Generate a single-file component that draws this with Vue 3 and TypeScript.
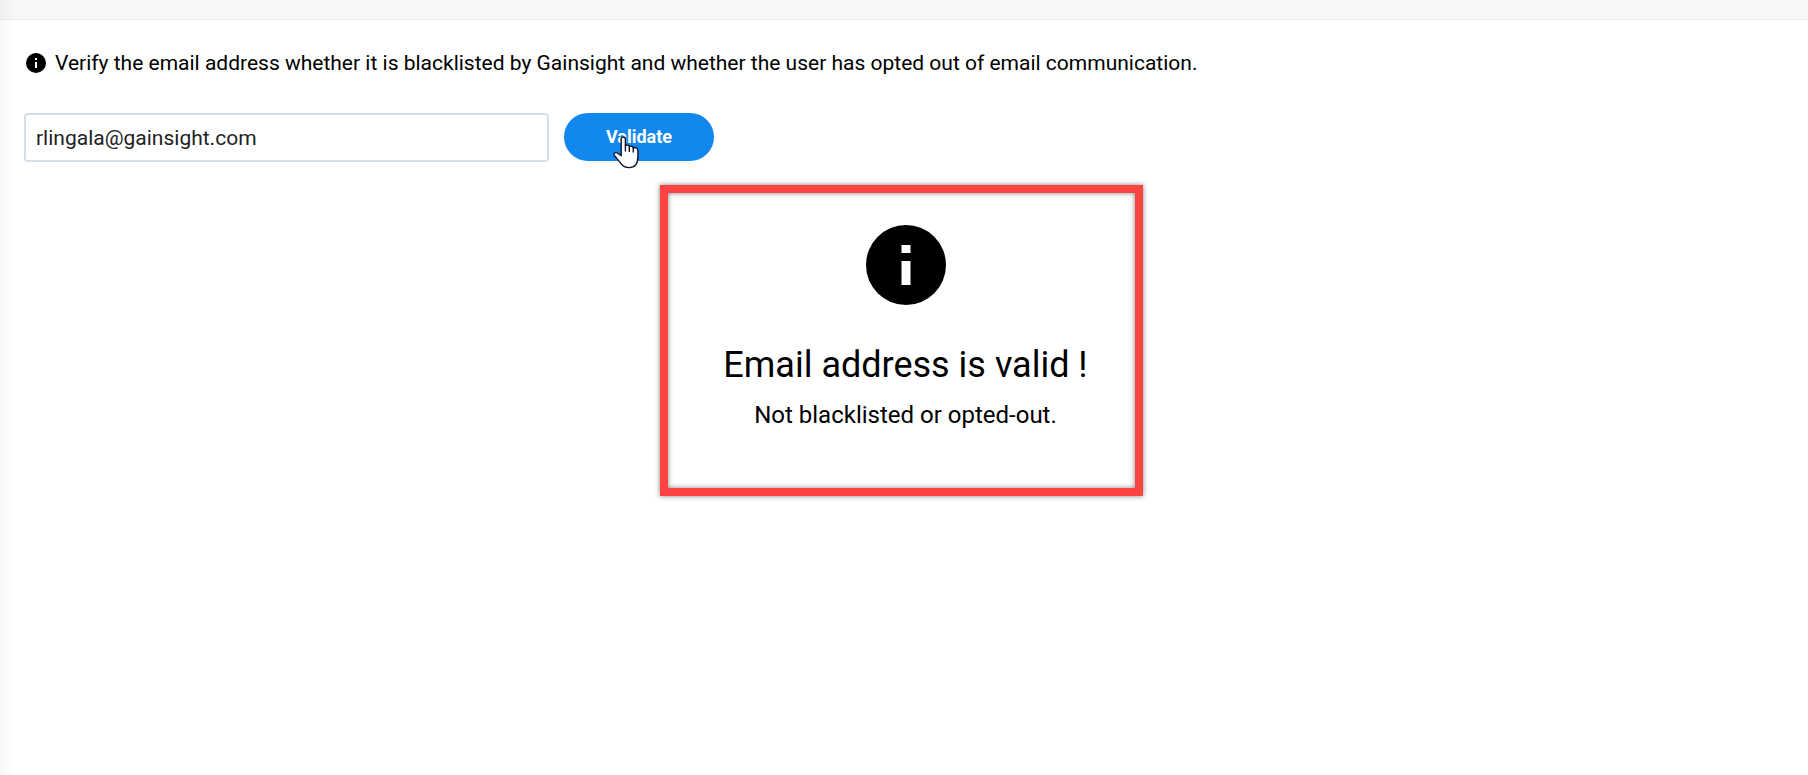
<script setup lang="ts">
import { ref } from 'vue'

const email = ref('rlingala@gainsight.com')
</script>

<template>
  <div class="page">
    <header class="topbar"></header>
    <main class="content">
      <p class="hint">
        <svg class="hint-icon" viewBox="0 0 20 20" aria-hidden="true">
          <circle cx="10" cy="10" r="10" />
          <path fill="#fff" d="M9 5h2v2H9zM9 9h2v6H9z" />
        </svg>
        <label for="email">Verify the email address whether it is blacklisted by Gainsight and whether the user has opted out of email communication.</label>
      </p>
      <form class="form" @submit.prevent>
        <input id="email" v-model="email" class="email" type="text" />
        <button class="validate" type="submit">
          Validate
          <svg class="pointer" viewBox="0 0 26 33" aria-hidden="true">
            <path
              fill="#fff"
              stroke="#15152a"
              stroke-width="1.4"
              stroke-linejoin="round"
              d="M8.2 19.8V3.3C8.2 .2 12.4 .2 12.4 3.3V9.8C13.5 8.5 16 9 16.3 10.7C17.6 9.6 20 10.2 20.3 12C22 11 24.9 11.8 24.9 14.4V20.5C24.9 27.5 22.2 31.6 16 31.6C11.6 31.6 9 29.5 7 26.4L1.2 19.2C.2 17.4 2.4 15.9 4.4 17Z"
            />
            <path fill="none" stroke="#15152a" stroke-width="1.4" stroke-linecap="round" d="M12.4 9.5V15M16.3 10.5V15.5M20.3 12V16" />
          </svg>
        </button>
      </form>
      <section class="result">
        <svg class="result-icon" viewBox="0 0 80 80" aria-hidden="true">
          <circle cx="40" cy="40" r="40" />
          <path fill="#fff" d="M35.5 20h9v8h-9zM35.5 36h9v24h-9z" />
        </svg>
        <h1 class="title">Email address is valid !</h1>
        <p class="subtitle">Not blacklisted or opted-out.</p>
      </section>
    </main>
  </div>
</template>

<style>
body {
  margin: 0;
  background: #fff;
}
</style>

<style scoped>
.page {
  position: relative;
  min-height: 100vh;
  box-sizing: border-box;
  font-family: Roboto, "Liberation Sans", sans-serif;
  color: #000;
}
.page::before {
  content: "";
  position: absolute;
  inset: 0 auto 0 0;
  width: 14px;
  background: linear-gradient(to right, rgba(0, 0, 0, 0.03), rgba(0, 0, 0, 0));
}
.topbar {
  height: 19px;
  background: #f6f7f9;
  border-bottom: 1px solid #eaecef;
}
.content {
  padding: 28px 29px 24px 24px;
}
.hint {
  display: flex;
  align-items: center;
  gap: 9px;
  margin: 0 0 35px;
  padding-left: 2px;
  font-size: 21px;
  line-height: 30px;
}
.hint-icon {
  flex: none;
  width: 20px;
  height: 20px;
}
.form {
  display: flex;
  gap: 15px;
}
.email {
  box-sizing: border-box;
  width: 525px;
  height: 49px;
  padding: 0 10px;
  border: 2px solid #d4dde8;
  border-radius: 4px;
  outline: none;
  background: #fff;
  color: #222;
  font: 21px Roboto, "Liberation Sans", sans-serif;
}
.validate {
  position: relative;
  width: 150px;
  height: 48px;
  padding: 0 0 2px;
  border: 0;
  border-radius: 24px;
  background: #1287ee;
  color: #fff;
  font: bold 18px Roboto, "Liberation Sans", sans-serif;
}
.pointer {
  position: absolute;
  left: 49px;
  top: 23px;
  width: 26px;
  height: 33px;
}
.result {
  display: flex;
  flex-direction: column;
  align-items: center;
  box-sizing: border-box;
  width: 483px;
  margin: 23px auto 0;
  padding: 32px 0 56px 8px;
  border: 8px solid #fe4343;
  box-shadow: 0 0 5px rgba(0, 0, 0, 0.5), inset 0 0 5px rgba(0, 0, 0, 0.5);
}
.result-icon {
  width: 80px;
  height: 80px;
}
.title {
  margin: 38px 0 12px;
  font-size: 36px;
  font-weight: 400;
  line-height: 44px;
}
.subtitle {
  margin: 0;
  font-size: 24px;
  line-height: 33px;
}
</style>
